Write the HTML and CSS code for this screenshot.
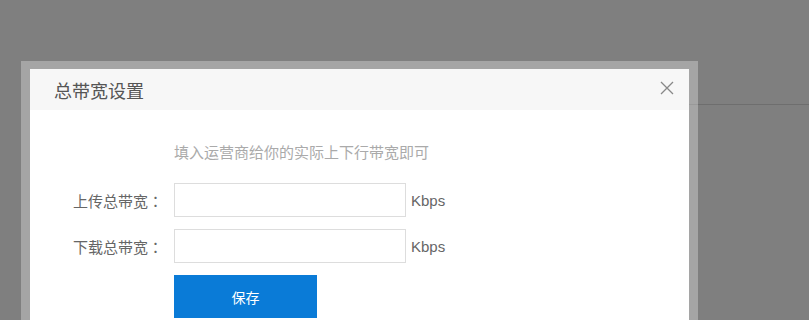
FILE: index.html
```html
<!DOCTYPE html>
<html lang="zh-CN">
<head>
	<meta charset="UTF-8">
	<title>总带宽设置</title>
	<link rel="stylesheet" href="styles.css">
</head>
<body>
	<div class="page">
		<div class="page-top"></div>
	</div>
	<div class="mask"></div>
	<div class="dialog">
		<div class="dialog-inner">
			<div class="dialog-head">
				<h3>总带宽设置</h3>
				<span class="close">
					<svg width="14" height="14" viewBox="0 0 14 14"><path d="M1 1L13 13M13 1L1 13" stroke="#888" stroke-width="1.3" fill="none"/></svg>
				</span>
			</div>
			<div class="dialog-body">
				<div class="form">
					<span></span>
					<p class="tip">填入运营商给你的实际上下行带宽即可</p>

					<label>上传总带宽<span class="colon" lang="ja">：</span></label>
					<div class="field"><input type="text"><span class="unit">Kbps</span></div>

					<label>下载总带宽<span class="colon" lang="ja">：</span></label>
					<div class="field"><input type="text"><span class="unit">Kbps</span></div>

					<span></span>
					<div><button class="btn">保存</button></div>
				</div>
			</div>
		</div>
	</div>
</body>
</html>
```
FILE: styles.css
```css
body,h3,p{margin:0;padding:0;}
body{
	height:320px;
	overflow:hidden;
	background:#fff;
	font-family:"Liberation Sans","Noto Sans CJK SC",sans-serif;
}
.page-top{
	height:104px;
	margin-left:689px;
	border-bottom:1px solid #dcdcdc;
}
.mask{
	position:absolute;
	left:0;
	top:0;
	width:100%;
	height:100%;
	background:rgba(0,0,0,0.5);
}
.dialog{
	position:absolute;
	left:21px;
	top:61px;
	width:659px;
	padding:8px 9px 0 9px;
	height:300px;
	background:rgba(255,255,255,0.3);
}
.dialog-inner{
	background:#fff;
	height:100%;
}
.dialog-head{
	height:41px;
	background:#f7f7f7;
	display:flex;
	align-items:center;
	justify-content:space-between;
	padding:0 15px 0 24px;
}
.dialog-head h3{
	font-size:18px;
	font-weight:normal;
	color:#555;
}
.close{
	display:flex;
	margin-top:-4px;
}
.dialog-body{
	padding-top:33px;
}
.form{
	display:grid;
	grid-template-columns:144px auto;
	row-gap:12px;
	align-items:center;
}
.tip{
	font-size:15px;
	line-height:20px;
	color:#aaa;
	margin-bottom:8px;
}
.form label{
	font-size:15px;
	color:#666;
	text-align:right;
	padding-right:11px;
}
.colon{
	font-family:"Noto Sans CJK JP",sans-serif;
}
.field{
	display:flex;
	align-items:center;
}
.field input{
	box-sizing:border-box;
	width:232px;
	height:34px;
	border:1px solid #ddd;
	margin:0;
	outline:none;
}
.unit{
	font-size:15px;
	color:#666;
	margin-left:5px;
}
.btn{
	width:143px;
	height:43px;
	border:0;
	background:#0a7bd7;
	color:#fff;
	font-size:14px;
	font-family:inherit;
	cursor:pointer;
}
```
